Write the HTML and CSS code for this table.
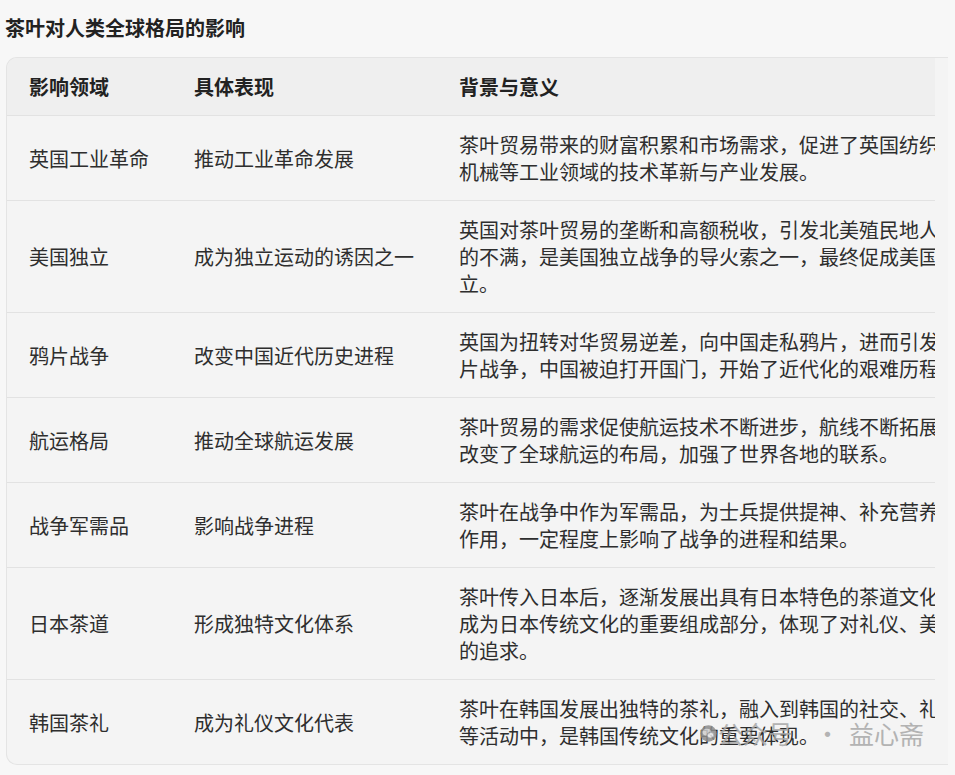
FILE: index.html
```html
<!DOCTYPE html>
<html lang="zh">
<head>
<meta charset="utf-8">
<link rel="stylesheet" href="styles.css">
</head>
<body>
<div class="page">
  <h2 class="title">茶叶对人类全球格局的影响</h2>
  <div class="card">
    <div class="scroller">
      <table class="tbl">
        <colgroup><col class="c1"><col class="c2"><col class="c3"></colgroup>
        <thead>
          <tr><th>影响领域</th><th>具体表现</th><th>背景与意义</th></tr>
        </thead>
        <tbody>
          <tr><td>英国工业革命</td><td>推动工业革命发展</td><td>茶叶贸易带来的财富积累和市场需求，促进了英国纺织、机械等工业领域的技术革新与产业发展。</td></tr>
          <tr><td>美国独立</td><td>成为独立运动的诱因之一</td><td>英国对茶叶贸易的垄断和高额税收，引发北美殖民地人民的不满，是美国独立战争的导火索之一，最终促成美国独立。</td></tr>
          <tr><td>鸦片战争</td><td>改变中国近代历史进程</td><td>英国为扭转对华贸易逆差，向中国走私鸦片，进而引发鸦片战争，中国被迫打开国门，开始了近代化的艰难历程。</td></tr>
          <tr><td>航运格局</td><td>推动全球航运发展</td><td>茶叶贸易的需求促使航运技术不断进步，航线不断拓展，改变了全球航运的布局，加强了世界各地的联系。</td></tr>
          <tr><td>战争军需品</td><td>影响战争进程</td><td>茶叶在战争中作为军需品，为士兵提供提神、补充营养的作用，一定程度上影响了战争的进程和结果。</td></tr>
          <tr><td>日本茶道</td><td>形成独特文化体系</td><td>茶叶传入日本后，逐渐发展出具有日本特色的茶道文化，成为日本传统文化的重要组成部分，体现了对礼仪、美学的追求。</td></tr>
          <tr><td>韩国茶礼</td><td>成为礼仪文化代表</td><td>茶叶在韩国发展出独特的茶礼，融入到韩国的社交、礼仪等活动中，是韩国传统文化的重要体现。</td></tr>
        </tbody>
      </table>
    </div>
  </div>
  <div class="watermark">
    <svg class="wm-icon" width="17" height="17" viewBox="0 0 26 26">
      <circle cx="13" cy="13" r="12.5" fill="#8c8c8c"/>
      <ellipse cx="10.5" cy="11" rx="6.5" ry="5.2" fill="#cfcfcf"/>
      <ellipse cx="16" cy="15.5" rx="5.2" ry="4.3" fill="#e6e6e6" stroke="#8c8c8c" stroke-width="1"/>
    </svg>
    <span class="wm-text">公众号</span>
    <span class="wm-text wm-dot">·</span>
    <span class="wm-text">益心斋</span>
  </div>
</div>
</body>
</html>
```

FILE: styles.css
```css
html, body {
  margin: 0;
  padding: 0;
  background: #f7f7f7;
}
body {
  font-family: "Noto Sans CJK SC", "Noto Sans", sans-serif;
  color: #2b2b2b;
}
.page {
  position: relative;
  width: 955px;
  height: 775px;
  overflow: hidden;
}
.title {
  margin: 0;
  padding: 14px 0 0 5px;
  font-size: 20px;
  line-height: 27px;
  font-weight: 700;
  color: #222;
}
.card {
  margin: 16px 7px 0 6px;
  background: #f4f4f4;
  border: 1px solid #e4e4e4;
  border-right: none;
  border-radius: 11px 0 0 11px;
  overflow: hidden;
  padding-right: 13px;
}
.scroller {
  overflow: hidden;
}
.tbl {
  border-collapse: collapse;
  table-layout: fixed;
  width: 980px;
  font-size: 20px;
  line-height: 27px;
}
.c1 { width: 165px; }
.c2 { width: 265px; }
.c3 { width: 550px; }
.tbl th {
  text-align: left;
  font-weight: 700;
  background: #efefef;
  padding: 15px 22px 15px;
  border-bottom: 1px solid #e2e2e2;
  color: #222;
  white-space: nowrap;
}
.tbl td {
  padding: 15px 22px;
  vertical-align: middle;
  border-bottom: 1px solid #e2e2e2;
  color: #2e2e2e;
}
.tbl td:nth-child(1),
.tbl td:nth-child(2) {
  white-space: nowrap;
}
.tbl tbody tr:last-child td {
  border-bottom: none;
}
.watermark {
  position: absolute;
  left: 700px;
  top: 718px;
  display: flex;
  align-items: center;
  pointer-events: none;
  opacity: 0.85;
}
.wm-icon {
  margin-right: 1px;
}
.wm-text {
  font-size: 25px;
  line-height: 30px;
  color: #a8a8a8;
}
.wm-dot {
  margin: 0 9px 0 22px;
}
```
